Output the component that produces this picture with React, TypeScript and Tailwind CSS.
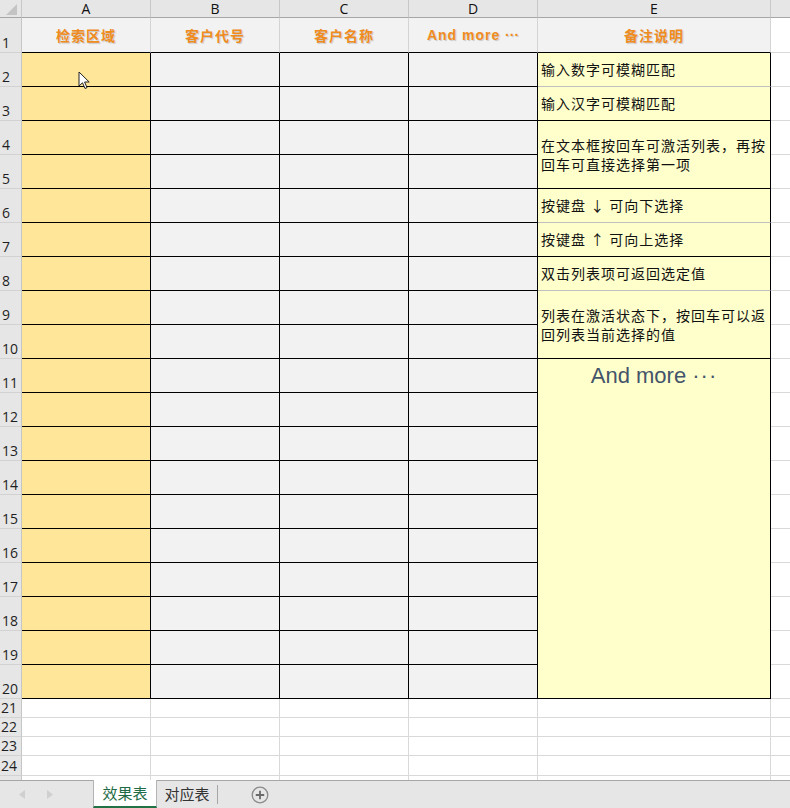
import React from "react";

const cjk = "font-['Noto_Sans_CJK_SC','Noto_Sans',sans-serif]";

const rowHdr =
  "bg-[#e6e6e6] border-r border-b border-r-[#c6c6c6] border-b-[#d2d2d2] flex items-end pl-[2px] text-[14px] leading-[18px] text-[#1f1f1f] font-['Open_Sans',sans-serif]";
const rowHdrSmall =
  "bg-[#e6e6e6] border-r border-b border-r-[#c6c6c6] border-b-[#d2d2d2] flex items-center pl-[1px] text-[14px] leading-[18px] text-[#1f1f1f] font-['Open_Sans',sans-serif]";
const colHdr =
  "bg-[#e6e6e6] border-r border-b border-r-[#c8c8c8] border-b-[#a6a6a6] flex items-center justify-center text-[14px] text-[#111] font-['Open_Sans',sans-serif]";
const headCell =
  "bg-[#f2f2f2] border-r border-b border-r-[#d4d4d4] border-b-black flex items-center justify-center text-[14px] font-bold tracking-[1px] text-[#f08c1e] [text-shadow:1px_1px_1px_rgba(0,0,0,0.18)]";
const aCell = "bg-[#ffe699] border-r border-b border-black";
const bCell = "bg-[#f2f2f2] border-r border-b border-black";
const fCell = "bg-white border-b border-[#d9d9d9]";
const emptyCell = "bg-white border-r border-b border-[#d9d9d9]";
const partialCell = "bg-white border-r border-[#d9d9d9]";
const eBlack =
  "bg-[#ffffcc] border-r border-b border-black flex flex-col justify-center pl-[3px] text-[14px] leading-[19px] tracking-[1px] text-[#111]";
const eGray =
  "bg-[#ffffcc] border-r border-b border-r-black border-b-[#c0c0c0] flex flex-col justify-center pl-[3px] text-[14px] leading-[19px] tracking-[1px] text-[#111]";

type ECell = { rows: number; gray?: boolean; lines: string[] } | null;

const eCells: Record<number, ECell> = {
  2: { rows: 1, gray: true, lines: ["输入数字可模糊匹配"] },
  3: { rows: 1, lines: ["输入汉字可模糊匹配"] },
  4: { rows: 2, lines: ["在文本框按回车可激活列表，再按", "回车可直接选择第一项"] },
  5: null,
  6: { rows: 1, gray: true, lines: ["按键盘 ↓ 可向下选择"] },
  7: { rows: 1, lines: ["按键盘 ↑ 可向上选择"] },
  8: { rows: 1, gray: true, lines: ["双击列表项可返回选定值"] },
  9: { rows: 2, lines: ["列表在激活状态下，按回车可以返", "回列表当前选择的值"] },
  10: null,
};

function Cursor() {
  return (
    <svg
      className="absolute left-[78px] top-[71px] pointer-events-none"
      width="14"
      height="20"
      viewBox="0 0 14 20"
    >
      <path
        d="M1 1 L1 15 L4.5 11.8 L7 17.5 L9 16.6 L6.6 11 L11.2 11 Z"
        fill="#fff"
        stroke="#222"
        strokeWidth="1"
        strokeLinejoin="round"
      />
    </svg>
  );
}

export default function App() {
  const dataRows: React.ReactNode[] = [];
  for (let r = 2; r <= 20; r++) {
    dataRows.push(
      <div key={`h${r}`} className={rowHdr}>
        {r}
      </div>
    );
    dataRows.push(<div key={`a${r}`} className={aCell} />);
    dataRows.push(<div key={`b${r}`} className={bCell} />);
    dataRows.push(<div key={`c${r}`} className={bCell} />);
    dataRows.push(<div key={`d${r}`} className={bCell} />);
    if (r <= 10) {
      const e = eCells[r];
      if (e) {
        dataRows.push(
          <div
            key={`e${r}`}
            className={`${e.gray ? eGray : eBlack} ${e.rows === 2 ? "row-span-2" : ""}`}
          >
            {e.lines.map((l, i) => (
              <span key={i} className="block whitespace-nowrap">
                {l}
              </span>
            ))}
          </div>
        );
      }
    } else if (r === 11) {
      dataRows.push(
        <div
          key="e11"
          className="row-span-10 bg-[#ffffcc] border-r border-b border-black flex justify-center pt-[2px] text-[22px] leading-[30px] text-[#44546a] font-['Liberation_Sans','Noto_Sans_CJK_SC',sans-serif]"
        >
          <span>
            And more <span className="tracking-[1px]">···</span>
          </span>
        </div>
      );
    }
    dataRows.push(<div key={`f${r}`} className={fCell} />);
  }

  const tailRows: React.ReactNode[] = [];
  for (let r = 21; r <= 24; r++) {
    tailRows.push(
      <div key={`h${r}`} className={rowHdrSmall}>
        {r}
      </div>
    );
    for (let c = 0; c < 5; c++) tailRows.push(<div key={`t${r}-${c}`} className={emptyCell} />);
    tailRows.push(<div key={`tf${r}`} className={fCell} />);
  }

  return (
    <div className={`w-[790px] h-[808px] overflow-hidden bg-white flex flex-col ${cjk}`}>
      <div className="relative h-[780px] grid grid-cols-[22px_129px_129px_129px_129px_233px_1fr] grid-rows-[18px_35px_repeat(19,34px)_19px_19px_19px_20px_1fr]">
        {/* column headers */}
        <div className="bg-[#e6e6e6] border-r border-b border-r-[#c8c8c8] border-b-[#a6a6a6] flex items-end justify-end pr-[4px] pb-[2px]">
          <svg width="11" height="11" viewBox="0 0 11 11">
            <path d="M11 0 L11 11 L0 11 Z" fill="#c4c4c4" />
          </svg>
        </div>
        <div className={colHdr}>A</div>
        <div className={colHdr}>B</div>
        <div className={colHdr}>C</div>
        <div className={colHdr}>D</div>
        <div className={colHdr}>E</div>
        <div className="bg-[#e6e6e6] border-b border-b-[#a6a6a6]" />

        {/* row 1 */}
        <div className={rowHdr}>1</div>
        <div className={headCell}>检索区域</div>
        <div className={headCell}>客户代号</div>
        <div className={headCell}>客户名称</div>
        <div className={`${headCell} font-['Liberation_Sans','Noto_Sans_CJK_SC',sans-serif] tracking-[0px]`}>
          <span>
            And more <span className="tracking-[0px]">···</span>
          </span>
        </div>
        <div className={headCell}>备注说明</div>
        <div className={fCell} />

        {dataRows}
        {tailRows}

        {/* partial row */}
        <div className="bg-[#e6e6e6] border-r border-r-[#c6c6c6]" />
        <div className={partialCell} />
        <div className={partialCell} />
        <div className={partialCell} />
        <div className={partialCell} />
        <div className={partialCell} />
        <div className="bg-white" />

        <Cursor />
      </div>

      {/* sheet tabs */}
      <div className="h-[28px] bg-[#e6e6e6] border-t border-[#a6a6a6] flex items-stretch">
        <div className="w-[93px] flex items-center">
          <svg className="ml-[19px]" width="6" height="9" viewBox="0 0 6 9">
            <path d="M6 0 L0 4.5 L6 9 Z" fill="#cfcfcf" />
          </svg>
          <svg className="ml-[22px]" width="6" height="9" viewBox="0 0 6 9">
            <path d="M0 0 L6 4.5 L0 9 Z" fill="#cfcfcf" />
          </svg>
        </div>
        <div className="-mt-px w-[64px] bg-white border-x border-[#b4b4b4] border-b-[2px] border-b-[#217346] flex items-center justify-center text-[15px] text-[#1e6b45]">
          效果表
        </div>
        <div className="w-[60px] flex items-center justify-center text-[15px] text-[#333]">
          对应表
        </div>
        <div className="my-[4px] w-px bg-[#a6a6a6]" />
        <div className="ml-[33px] flex items-center">
          <svg width="18" height="18" viewBox="0 0 18 18">
            <circle cx="9" cy="9" r="7.8" fill="none" stroke="#8a8a8a" strokeWidth="1.3" />
            <path d="M9 4.8 V13.2 M4.8 9 H13.2" stroke="#6a6a6a" strokeWidth="1.8" />
          </svg>
        </div>
      </div>
    </div>
  );
}
